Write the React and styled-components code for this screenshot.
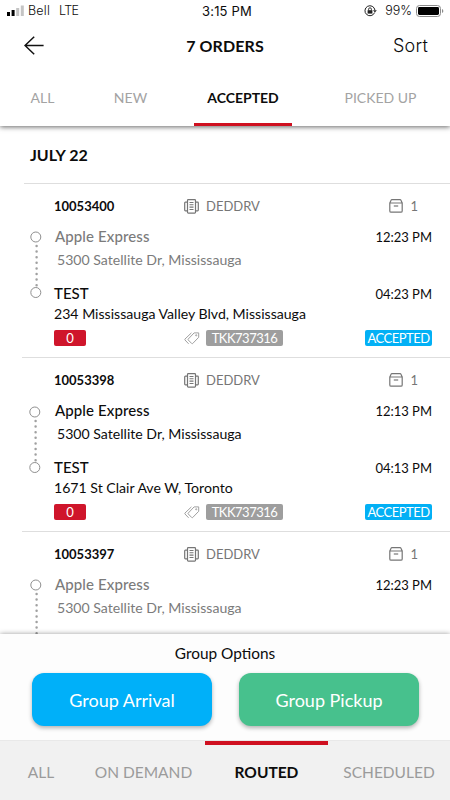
import React from 'react'
import styled, {createGlobalStyle} from 'styled-components'

const GlobalStyle = createGlobalStyle`
    * {
        box-sizing: border-box;
    }

    body {
        margin: 0;
        background: #fff;
        font-family: Lato, "Liberation Sans", sans-serif;
        color: #0c0c0c;
    }

    button {
        font-family: inherit;
        border: none;
        background: none;
        padding: 0;
        color: inherit;
    }
`

const Screen = styled.div`
    width: 450px;
    height: 800px;
    display: flex;
    flex-direction: column;
    overflow: hidden;
    background: #fff;
`

const Top = styled.div`
    flex: none;
    height: 126px;
    display: flex;
    flex-direction: column;
    background: #fff;
    box-shadow: 0 1px 5px rgba(0, 0, 0, 0.6);
    z-index: 2;
`

const StatusBar = styled.div`
    height: 22px;
    display: grid;
    grid-template-columns: 1fr auto 1fr;
    align-items: center;
    padding: 0 6px 0 7px;
    font-family: Inter, sans-serif;
    font-size: 12.5px;
    line-height: 20px;
`

const StatusSide = styled.div`
    display: flex;
    align-items: center;
    justify-content: ${p => p.$end ? 'flex-end' : 'flex-start'};
    white-space: pre;
    font-weight: 300;
`

const Carrier = styled.span`
    margin-left: 4px;
    letter-spacing: 0.2px;
`

const Network = styled.span`
    margin-left: 9px;
    letter-spacing: -0.6px;
`

const Clock = styled.span`
    font-weight: 400;
    font-size: 13px;
    letter-spacing: 0.2px;
    margin-left: 3px;
`

const Percent = styled.span`
    margin: 0 4px 0 8px;
`

const Header = styled.div`
    height: 48px;
    display: grid;
    grid-template-columns: 1fr auto 1fr;
    align-items: center;
    padding: 0 22px 0 24px;
`

const BackButton = styled.button`
    display: flex;
    justify-self: start;
    margin-bottom: 1px;
`

const Title = styled.h1`
    margin: 0 2px 0 0;
    font-size: 16px;
    font-weight: 700;
    line-height: 20px;
    letter-spacing: 0.1px;
`

const Sort = styled.button`
    justify-self: end;
    font-family: Inter, sans-serif;
    font-size: 18px;
    font-weight: 300;
    line-height: 22px;
    letter-spacing: 0.2px;
`

const Tabs = styled.div`
    flex: 1;
    display: flex;
`

const Tab = styled.button`
    flex: none;
    width: ${p => p.$width}px;
    margin-right: ${p => p.$after || 0}px;
    font-size: 14px;
    line-height: 18px;
    font-weight: ${p => p.$active ? 700 : 400};
    color: ${p => p.$active ? '#0c0c0c' : '#a3a3a3'};
    border-bottom: 3px solid ${p => p.$active ? '#cf1020' : 'transparent'};
    padding-top: 3px;
`

const List = styled.div`
    flex: 1;
    min-height: 0;
    overflow: hidden;
`

const DateRow = styled.div`
    height: 57px;
    display: flex;
    align-items: center;
    padding: 0 0 0 30px;
    font-size: 16px;
    font-weight: 700;
`

const Order = styled.div`
    height: 174px;
    margin-left: ${p => p.$first ? 24 : 22}px;
    padding-left: ${p => p.$first ? 5 : 7}px;
    border-top: 1px solid #dedede;
    display: grid;
    grid-template-columns: 25px 1fr;
`

const Rail = styled.svg`
    margin: ${p => p.$low ? '47px 0 0 0' : '46px 0 0 1px'};
`

const Details = styled.div`
    display: flex;
    flex-direction: column;
    padding: 12px 18px 0 0;
`

const Meta = styled.div`
    height: 20px;
    display: grid;
    grid-template-columns: 130px 1fr auto;
    align-items: center;
    font-size: 13px;
    color: #767676;
    padding-right: 14px;
`

const OrderNumber = styled.span`
    font-size: 13px;
    font-weight: 700;
    color: #0c0c0c;
`

const IconText = styled.span`
    display: flex;
    align-items: center;
    gap: ${p => p.$gap}px;
`

const Stop = styled.div`
    display: flex;
    flex-direction: column;
    margin-top: ${p => p.$second ? 13 : 10}px;
    color: ${p => p.$muted ? '#7b7b7b' : '#0c0c0c'};
`

const StopLine = styled.div`
    height: 20px;
    display: flex;
    justify-content: space-between;
    align-items: center;
    padding-left: ${p => p.$indent || 0}px;
`

const StopName = styled.span`
    font-size: 15px;
    font-weight: 500;
    letter-spacing: ${p => p.$spacing || 0}px;
`

const Time = styled.span`
    font-size: 13px;
    color: #0c0c0c;
    padding-top: 2px;
`

const Address = styled.div`
    height: 20px;
    margin-top: ${p => p.$gap}px;
    padding-left: ${p => p.$indent || 0}px;
    font-size: 14.1px;
    line-height: 20px;
    white-space: nowrap;
`

const Badges = styled.div`
    display: grid;
    grid-template-columns: 130px 1fr auto;
    align-items: center;
    margin-top: 6px;
`

const Badge = styled.span`
    width: ${p => p.$width}px;
    height: 16px;
    border-radius: 2px;
    background: ${p => p.$color};
    color: #fff;
    font-size: 13px;
    line-height: 17px;
    letter-spacing: ${p => p.$spacing || 0}px;
    text-align: center;
`

const GroupPanel = styled.div`
    flex: none;
    height: 106px;
    background: #fdfdfd;
    box-shadow: 0 0 5px rgba(0, 0, 0, 0.4);
    z-index: 2;
`

const GroupTitle = styled.div`
    height: 39px;
    line-height: 38px;
    font-size: 15.4px;
    text-align: center;
`

const GroupButtons = styled.div`
    display: flex;
    gap: 27px;
    padding-left: 32px;
`

const GroupButton = styled.button`
    width: 180px;
    height: 53px;
    border-radius: 12px;
    background: ${p => p.$color};
    color: #fff;
    font-size: 18px;
    box-shadow: 0 2px 4px rgba(0, 0, 0, 0.3);
`

const BottomTabs = styled.div`
    flex: none;
    height: 60px;
    display: flex;
    background: #f1f1f1;
    border-top: 1px solid #e9e9e9;
    z-index: 3;
`

const BottomTab = styled.button`
    flex: none;
    width: ${p => p.$width}px;
    padding: 0 0 1px;
    border-top: 4px solid ${p => p.$active ? '#cf1020' : 'transparent'};
    font-size: 15.5px;
    font-weight: ${p => p.$active ? 700 : 400};
    color: ${p => p.$active ? '#0c0c0c' : '#9b9b9b'};
`

const SignalIcon = () => (
    <svg width="17" height="12" viewBox="0 0 17 12">
        <rect x="0" y="7" width="3" height="4" fill="#000" />
        <rect x="4.6" y="5" width="3" height="6" fill="#000" />
        <rect x="9.2" y="3" width="3" height="8" fill="#c4c4c4" />
        <rect x="13.8" y="0.5" width="3" height="10.5" fill="#c4c4c4" />
    </svg>
)

const LockIcon = () => (
    <svg width="13" height="12" viewBox="0 0 13 12" fill="none" stroke="#222">
        <path d="M10.6 7.6A5 5 0 1 1 10.9 5" />
        <path d="M9 5.2h3.8L10.9 7.6z" fill="#222" stroke="none" />
        <rect x="3.6" y="5.2" width="4.8" height="3.4" fill="#222" stroke="none" />
        <path d="M4.6 5.4V4.2a1.4 1.4 0 0 1 2.8 0v1.2" strokeWidth="0.9" />
    </svg>
)

const BatteryIcon = () => (
    <svg width="28" height="12" viewBox="0 0 28 12">
        <rect x="0.5" y="0.5" width="24" height="11" rx="3" fill="none" stroke="#8b8b8b" />
        <rect x="2" y="2" width="21" height="8" rx="1.4" fill="#000" />
        <path d="M26 4v4c1.8-.6 1.8-3.4 0-4z" fill="#8b8b8b" />
    </svg>
)

const BackIcon = () => (
    <svg width="20" height="19" viewBox="0 0 20 19" fill="none" stroke="#111" strokeWidth="1.5">
        <path d="M19.6 9.5H1M10.2 0.7L1 9.5l9.2 8.8" />
    </svg>
)

const BuildingIcon = () => (
    <svg width="15" height="15" viewBox="0 0 15 15" fill="none" stroke="#767676">
        <rect x="3.5" y="0.7" width="8" height="13.4" rx="0.8" strokeWidth="1.2" />
        <path d="M3.5 3.2H1.4a.7.7 0 0 0-.7.7v7.2c0 .4.3.7.7.7h2.1M11.5 3.2h2.1c.4 0 .7.3.7.7v7.2c0 .4-.3.7-.7.7h-2.1" strokeWidth="1.2" />
        <path d="M5.5 3.5h4M5.5 5.8h4M5.5 8.1h4M5.5 10.5h4" strokeWidth="1.1" />
    </svg>
)

const BoxIcon = () => (
    <svg width="14" height="14" viewBox="0 0 14 14" fill="none" stroke="#767676" strokeWidth="1.2">
        <path d="M0.8 3.9L2.2 1.1Q2.4.7 2.9.7h8.2q.5 0 .7.4l1.4 2.8v8q0 1.3-1.3 1.3H2.1q-1.3 0-1.3-1.3zM0.8 4h12.4" />
        <path d="M4.8 7h4.4" />
    </svg>
)

const TagsIcon = () => (
    <svg width="16" height="13" viewBox="0 0 16 13" fill="none" stroke="#a0a0a0" strokeLinejoin="round">
        <path d="M10.1.9h4.6v4.4l-6 6.2q-.5.5-1 0L4.3 8q-.5-.5 0-1z" />
        <path d="M7.4.9L1 7q-.5.5 0 1l3.6 3.8" />
        <circle cx="12.2" cy="3.3" r="0.6" />
    </svg>
)

// pickup and drop-off markers joined by a dotted line
const StopRail = ({low}) => (
    <Rail $low={low} width="13" height="70" viewBox="0 0 13 70" fill="none" stroke="#8f8f8f">
        <circle cx="5.8" cy="7" r="5" />
        <path d="M6.6 16V56" stroke="#a0a0a0" strokeWidth="2.5" strokeLinecap="round" strokeDasharray="0 5.6" />
        <circle cx="5.8" cy="62.5" r="5" />
    </Rail>
)

const orders = [
    {
        number: '10053400',
        muted: true,
        pickup: '12:23 PM',
        dropoff: '04:23 PM',
        address: '234 Mississauga Valley Blvd, Mississauga',
    },
    {
        number: '10053398',
        muted: false,
        pickup: '12:13 PM',
        dropoff: '04:13 PM',
        address: '1671 St Clair Ave W, Toronto',
    },
    {
        number: '10053397',
        muted: true,
        pickup: '12:23 PM',
    },
]

const DropOff = ({order}) => (
    <>
        <Stop $second>
            <StopLine>
                <StopName>TEST</StopName>
                <Time>{order.dropoff}</Time>
            </StopLine>
            <Address $gap={1}>{order.address}</Address>
        </Stop>
        <Badges>
            <Badge $width={32} $color="#cf152b">0</Badge>
            <IconText $gap={6}>
                <TagsIcon />
                <Badge $width={77} $color="#9e9e9e" $spacing={-0.5}>TKK737316</Badge>
            </IconText>
            <Badge $width={67} $color="#02b0f5" $spacing={-0.5}>ACCEPTED</Badge>
        </Badges>
    </>
)

const OrderItem = ({order, first}) => (
    <Order $first={first}>
        <StopRail low={!order.muted} />
        <Details>
            <Meta>
                <OrderNumber>{order.number}</OrderNumber>
                <IconText $gap={7}><BuildingIcon />DEDDRV</IconText>
                <IconText $gap={7}><BoxIcon />1</IconText>
            </Meta>
            <Stop $muted={order.muted}>
                <StopLine $indent={1}>
                    <StopName $spacing={0.1}>Apple Express</StopName>
                    <Time>{order.pickup}</Time>
                </StopLine>
                <Address $gap={4} $indent={3}>5300 Satellite Dr, Mississauga</Address>
            </Stop>
            {order.dropoff && <DropOff order={order} />}
        </Details>
    </Order>
)

export default function App(){
    return <Screen>
        <GlobalStyle />
        <Top>
            <StatusBar>
                <StatusSide>
                    <SignalIcon />
                    <Carrier>Bell</Carrier>
                    <Network>LTE</Network>
                </StatusSide>
                <Clock>3:15 PM</Clock>
                <StatusSide $end>
                    <LockIcon />
                    <Percent>99%</Percent>
                    <BatteryIcon />
                </StatusSide>
            </StatusBar>
            <Header>
                <BackButton aria-label="Back"><BackIcon /></BackButton>
                <Title>7 ORDERS</Title>
                <Sort>Sort</Sort>
            </Header>
            <Tabs>
                <Tab $width={85}>ALL</Tab>
                <Tab $width={91} $after={18}>NEW</Tab>
                <Tab $width={98} $after={19} $active>ACCEPTED</Tab>
                <Tab $width={139}>PICKED UP</Tab>
            </Tabs>
        </Top>
        <List>
            <DateRow>JULY 22</DateRow>
            {orders.map((order, i) => (
                <OrderItem key={order.number} order={order} first={i === 0} />
            ))}
        </List>
        <GroupPanel>
            <GroupTitle>Group Options</GroupTitle>
            <GroupButtons>
                <GroupButton $color="#00b0f9">Group Arrival</GroupButton>
                <GroupButton $color="#47c18d">Group Pickup</GroupButton>
            </GroupButtons>
        </GroupPanel>
        <BottomTabs>
            <BottomTab $width={82}>ALL</BottomTab>
            <BottomTab $width={123}>ON DEMAND</BottomTab>
            <BottomTab $width={123} $active>ROUTED</BottomTab>
            <BottomTab $width={122}>SCHEDULED</BottomTab>
        </BottomTabs>
    </Screen>
}
